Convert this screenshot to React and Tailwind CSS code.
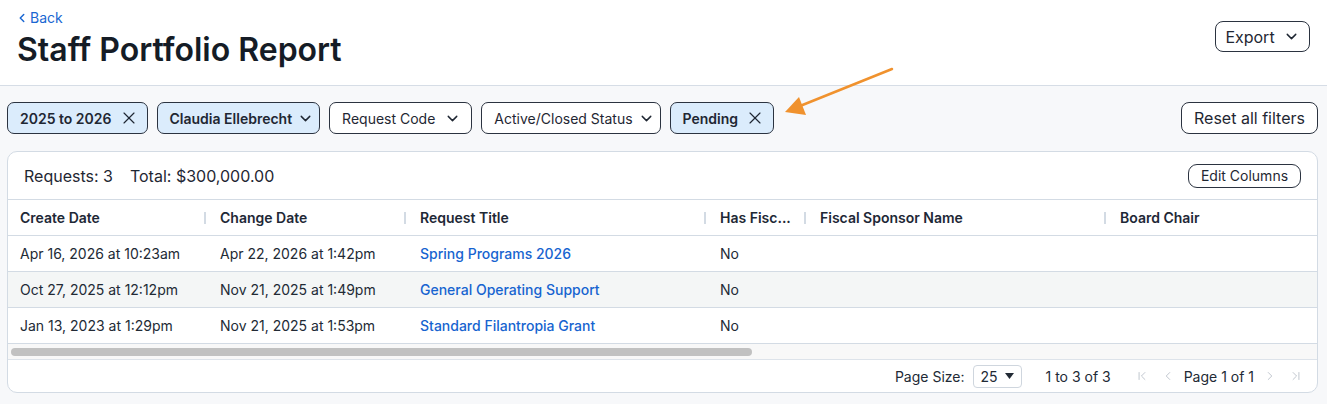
import React from "react";
import { ChevronLeft, ChevronDown, ChevronRight, ChevronFirst, ChevronLast, X } from "lucide-react";

const cols = [
  { name: "Create Date", w: "w-[200px]" },
  { name: "Change Date", w: "w-[200px]" },
  { name: "Request Title", w: "w-[300px]" },
  { name: "Has Fisc...", w: "w-[100px]" },
  { name: "Fiscal Sponsor Name", w: "w-[300px]" },
  { name: "Board Chair", w: "w-[300px]" },
];

const rows = [
  ["Apr 16, 2026 at 10:23am", "Apr 22, 2026 at 1:42pm", "Spring Programs 2026", "No"],
  ["Oct 27, 2025 at 12:12pm", "Nov 21, 2025 at 1:49pm", "General Operating Support", "No"],
  ["Jan 13, 2023 at 1:29pm", "Nov 21, 2025 at 1:53pm", "Standard Filantropia Grant", "No"],
];

function Chip({ label, active, bold, kind, wide }) {
  const spacing =
    kind === "x" ? "gap-[7px] pr-[8px]" : wide ? "gap-[9px] pr-[10px]" : "gap-[5px] pr-[5px]";
  return (
    <div
      className={`h-[32px] flex items-center pl-[12px] rounded-[7px] border border-[#2b3340] text-[14px] text-[#1f2733] ${
        active ? "bg-[#dbecfc]" : "bg-white"
      } ${bold ? "font-semibold" : "font-normal"} ${spacing}`}
    >
      <span className="whitespace-nowrap">{label}</span>
      {kind === "x" ? (
        <X size={20} strokeWidth={1.4} />
      ) : (
        <ChevronDown size={17} strokeWidth={2} />
      )}
    </div>
  );
}

export default function App() {
  return (
    <div className="relative min-h-screen bg-[#f7f8fa] font-['Inter',sans-serif] text-[#1f2733]">
      {/* Header */}
      <div className="h-[86px] bg-white border-b border-[#d6dde6] flex justify-between pl-[15px] pr-[17px]">
        <div className="pt-[9px]">
          <div className="flex items-center text-[14px] text-[#1a67d2] leading-[18px]">
            <ChevronLeft size={14} strokeWidth={2.5} />
            <span className="ml-[1px]">Back</span>
          </div>
          <h1 className="mt-[3px] pl-[2px] text-[32px] leading-[40px] font-semibold text-[#151c26]">
            Staff Portfolio Report
          </h1>
        </div>
        <div className="pt-[21px]">
          <button className="h-[31px] w-[95px] flex items-center justify-center gap-[8px] rounded-[8px] border border-[#2b3340] bg-white text-[16px] text-[#1f2733]">
            <span>Export</span>
            <ChevronDown size={17} strokeWidth={2} />
          </button>
        </div>
      </div>

      {/* Filters */}
      <div className="flex justify-between items-center pl-[7px] pr-[9px] pt-[16px]">
        <div className="flex gap-[9px]">
          <Chip label="2025 to 2026" active bold kind="x" />
          <Chip label="Claudia Ellebrecht" active bold kind="chev" />
          <Chip label="Request Code" kind="chev" wide />
          <Chip label="Active/Closed Status" kind="chev" />
          <Chip label="Pending" active bold kind="x" />
        </div>
        <button className="h-[32px] w-[137px] rounded-[8px] border border-[#2b3340] bg-white text-[16px] text-[#1f2733]">
          Reset all filters
        </button>
      </div>

      {/* Card */}
      <div className="ml-[7px] mt-[17px] mr-[9px] rounded-[10px] border border-[#d3dbe4] bg-white overflow-hidden">
        <div className="h-[48px] border-b border-[#d3dbe4] flex items-center justify-between pl-[16px] pr-[16px]">
          <div className="flex gap-[17px] text-[16px] text-[#1f2733]">
            <span>Requests: 3</span>
            <span>Total: $300,000.00</span>
          </div>
          <button className="h-[24px] w-[113px] rounded-[9px] border border-[#2b3340] text-[14px] text-[#1f2733] flex items-center justify-center">
            Edit Columns
          </button>
        </div>

        <div className="overflow-hidden">
          <div className="w-[2400px]">
            <div className="h-[36px] border-b border-[#d3dbe4] flex">
              {cols.map((c, i) => (
                <div key={i} className={`${c.w} shrink-0 flex items-center justify-between pl-[12px] pr-[2px]`}>
                  <span className="text-[14px] font-semibold text-[#1e2836] whitespace-nowrap">{c.name}</span>
                  {i < cols.length - 1 && <span className="w-[2px] h-[12px] bg-[#d3dbe4] shrink-0" />}
                </div>
              ))}
            </div>
            {rows.map((r, ri) => (
              <div
                key={ri}
                className={`h-[36px] border-b border-[#d3dbe4] flex text-[14px] ${ri === 1 ? "bg-[#f4f6f6]" : "bg-white"}`}
              >
                {cols.map((c, ci) => (
                  <div key={ci} className={`${c.w} shrink-0 flex items-center pl-[12px]`}>
                    {ci === 2 ? (
                      <span className="text-[#1764d0] font-medium">{r[2]}</span>
                    ) : (
                      <span className="text-[#222a35]">{r[ci] || ""}</span>
                    )}
                  </div>
                ))}
              </div>
            ))}
          </div>
        </div>

        {/* Fake horizontal scrollbar */}
        <div className="h-[16px] bg-[#f8f8f8] border-b border-[#dde3ea] flex items-center pl-[3px]">
          <div className="h-[8px] w-[741px] rounded-full bg-[#c1c1c1]" />
        </div>

        {/* Footer */}
        <div className="h-[32px] flex items-center justify-end pr-[14px] text-[14px] text-[#222a35]">
          <span>Page Size:</span>
          <div className="ml-[8px] h-[23px] w-[49px] rounded-[4px] border border-[#cfd6de] flex items-center pl-[7px] gap-[7px]">
            <span>25</span>
            <svg width="9" height="6" viewBox="0 0 9 6">
              <polygon points="0,0 9,0 4.5,6" fill="#222a35" />
            </svg>
          </div>
          <span className="ml-[24px]">1 to 3 of 3</span>
          <div className="ml-[24px] flex items-center gap-[8px] text-[#b8bfc8]">
            <ChevronFirst size={14} strokeWidth={1.5} />
            <ChevronLeft size={14} strokeWidth={1.5} className="ml-[4px]" />
          </div>
          <span className="ml-[9px]">Page 1 of 1</span>
          <div className="ml-[9px] flex items-center gap-[12px] text-[#b8bfc8]">
            <ChevronRight size={14} strokeWidth={1.5} />
            <ChevronLast size={14} strokeWidth={1.5} />
          </div>
        </div>
      </div>

      {/* Annotation arrow */}
      <svg className="absolute left-0 top-0 pointer-events-none" width="1327" height="404">
        <line x1="892" y1="69" x2="800" y2="106" stroke="#f0922e" strokeWidth="2.5" strokeLinecap="round" />
        <polygon points="785,112 799,97 806,115" fill="#f0922e" />
      </svg>
    </div>
  );
}
